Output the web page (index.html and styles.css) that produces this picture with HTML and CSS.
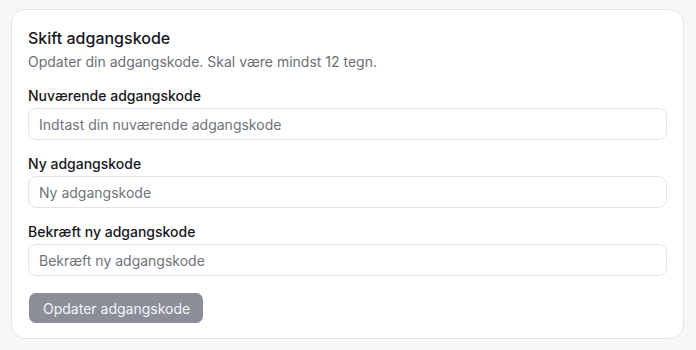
FILE: index.html
```html
<!DOCTYPE html>
<html lang="da">
<head>
<meta charset="utf-8">
<link rel="stylesheet" href="styles.css">
</head>
<body>
<div class="card">
  <h2 class="title">Skift adgangskode</h2>
  <p class="subtitle">Opdater din adgangskode. Skal være mindst 12 tegn.</p>
  <div class="field">
    <label class="label">Nuværende adgangskode</label>
    <input class="input" type="password" placeholder="Indtast din nuværende adgangskode">
  </div>
  <div class="field">
    <label class="label">Ny adgangskode</label>
    <input class="input" type="password" placeholder="Ny adgangskode">
  </div>
  <div class="field">
    <label class="label">Bekræft ny adgangskode</label>
    <input class="input" type="password" placeholder="Bekræft ny adgangskode">
  </div>
  <button class="btn" disabled>Opdater adgangskode</button>
</div>
</body>
</html>
```
FILE: styles.css
```css
* { box-sizing: border-box; }
html, body { margin: 0; }
body {
  background: #f6f7f9;
  padding: 9px 12px 11px 11px;
  font-family: Inter, "Noto Sans", sans-serif;
  color: #16181d;
}
.card {
  background: #fff;
  border: 1px solid #e3e5e8;
  border-radius: 14px;
  padding: 16px 16px 15px 16px;
  display: flex;
  flex-direction: column;
  align-items: flex-start;
}
.title {
  margin: 0;
  font-size: 16px;
  font-weight: 500;
  line-height: 24px;
}
.subtitle {
  margin: 2px 0 0;
  font-size: 14px;
  line-height: 20px;
  color: #6b6f76;
}
.field {
  width: 100%;
  display: flex;
  flex-direction: column;
  gap: 2px;
  margin-top: 14px;
}
.label {
  font-size: 14px;
  font-weight: 500;
  line-height: 20px;
}
.input {
  width: 100%;
  height: 32px;
  border: 1px solid #e3e5e8;
  border-radius: 8px;
  padding: 0 10px;
  font-family: inherit;
  font-size: 14px;
  background: #fff;
}
.input::placeholder { color: #6f737a; }
.btn {
  margin-top: 17px;
  margin-left: 1px;
  height: 30px;
  padding: 0 13px 0 14px;
  border: none;
  border-radius: 7px;
  background: #8a8e99;
  color: #f2f3f5;
  font-family: inherit;
  font-size: 14px;
  font-weight: 400;
}
```
